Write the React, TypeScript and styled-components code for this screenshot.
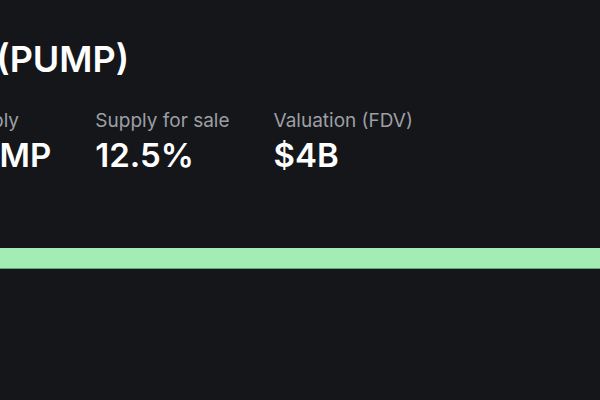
import * as React from 'react';
import styled, { createGlobalStyle } from 'styled-components';

const GlobalStyle = createGlobalStyle`
  html, body {
    margin: 0;
    padding: 0;
    background: #14161a;
    overflow: hidden;
  }
  body {
    font-family: Inter, "Noto Sans", sans-serif;
    color: #ffffff;
  }
`;

const Page = styled.div`
  width: 600px;
  height: 400px;
  overflow: hidden;
  background: #14161a;
`;

// the screenshot is a crop of a wider page, so the column starts off-screen
const Content = styled.div`
  display: flex;
  flex-direction: column;
  margin-left: -90px;
  padding-top: 35px;
`;

const Title = styled.h1`
  margin: 0 0 0 -23px;
  font-size: 36px;
  font-weight: 600;
  line-height: 48px;
  white-space: nowrap;
`;

const Stats = styled.div`
  display: flex;
  gap: 44px;
  margin-top: 25px;
`;

const Stat = styled.div`
  display: flex;
  flex-direction: column;
  gap: 1px;
`;

const Label = styled.span`
  font-size: 19px;
  line-height: 26px;
  color: #9d9fa5;
  white-space: nowrap;
`;

const Value = styled.span`
  font-size: 33px;
  font-weight: 600;
  line-height: 40px;
  white-space: nowrap;
`;

const Progress = styled.div`
  margin-top: 73px;
  width: 800px;
  height: 21px;
  background: #a3edb5;
  box-shadow: inset 0 -1px 0 #6aa57c;
`;

const stats = [
  { label: 'Total supply', value: '1T PUMP' },
  { label: 'Supply for sale', value: '12.5%' },
  { label: 'Valuation (FDV)', value: '$4B' },
];

export default function App() {
  return (
    <Page>
      <GlobalStyle />
      <Content>
        <Title>Pump (PUMP)</Title>
        <Stats>
          {stats.map(s => (
            <Stat key={s.label}>
              <Label>{s.label}</Label>
              <Value>{s.value}</Value>
            </Stat>
          ))}
        </Stats>
        <Progress />
      </Content>
    </Page>
  );
}
